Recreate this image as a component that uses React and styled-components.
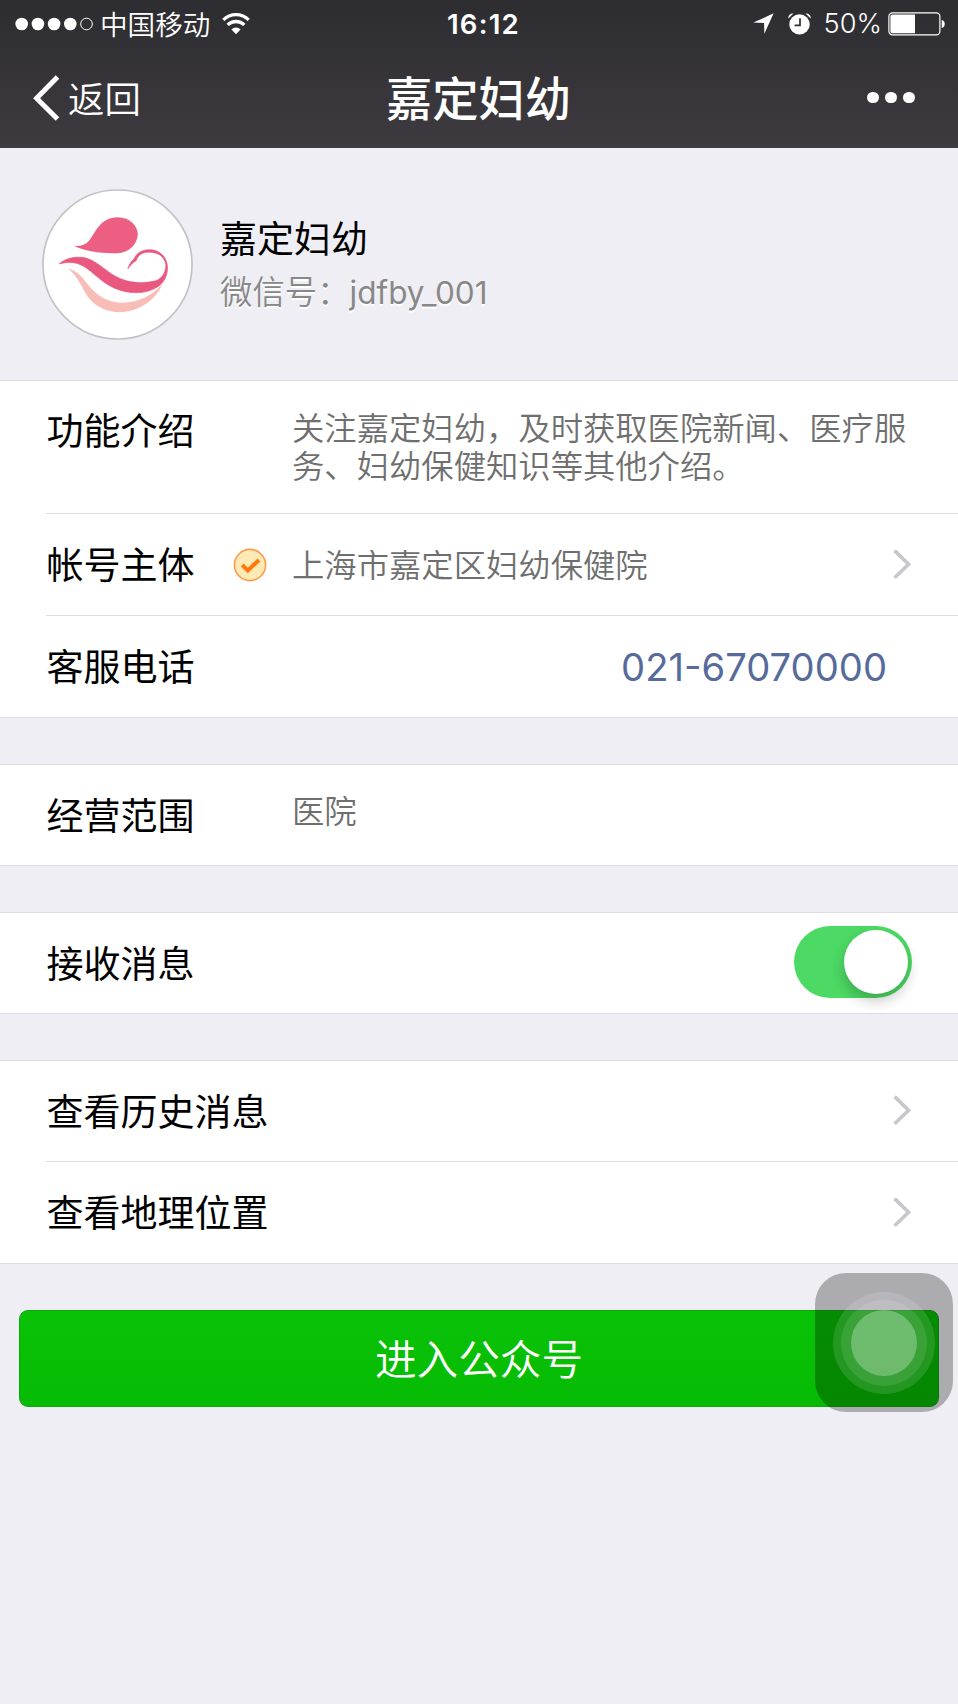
import { useState } from 'react';
import styled, { createGlobalStyle } from 'styled-components';

const intro = '关注嘉定妇幼，及时获取医院新闻、医疗服务、妇幼保健知识等其他介绍。';

export default function App() {
  const [receive, setReceive] = useState(true);

  return (
    <Page>
      <GlobalStyle />
      <Header>
        <StatusBar>
          <StatusLeft>
            <SignalIcon />
            <Carrier>中国移动</Carrier>
            <WifiIcon />
          </StatusLeft>
          <Time>16:12</Time>
          <StatusRight>
            <StatusIcons>
              <LocationIcon />
              <AlarmIcon />
            </StatusIcons>
            <Percent>50%</Percent>
            <BatteryIcon />
          </StatusRight>
        </StatusBar>
        <NavBar>
          <BackButton>
            <BackIcon />
            <span>返回</span>
          </BackButton>
          <Title>嘉定妇幼</Title>
          <MoreButton aria-label='more'>
            <Dot />
            <Dot />
            <Dot />
          </MoreButton>
        </NavBar>
      </Header>

      <Profile>
        <Avatar />
        <ProfileText>
          <Name>嘉定妇幼</Name>
          <WechatId>
            微信号：<Latin>jdfby_001</Latin>
          </WechatId>
        </ProfileText>
      </Profile>

      <Group>
        <Row $height={132} $top>
          <Label>功能介绍</Label>
          <Value $multiline>{intro}</Value>
        </Row>
        <Row $divider>
          <Label>帐号主体</Label>
          <VerifiedIcon />
          <Value>上海市嘉定区妇幼保健院</Value>
          <Chevron />
        </Row>
        <Row $divider>
          <Label>客服电话</Label>
          <Phone>021-67070000</Phone>
        </Row>
      </Group>

      <Group>
        <Row>
          <Label>经营范围</Label>
          <Value $raised>医院</Value>
        </Row>
      </Group>

      <Group>
        <Row>
          <Label>接收消息</Label>
          <Switch $on={receive} role='switch' aria-checked={receive} onClick={() => setReceive(!receive)}>
            <Thumb />
          </Switch>
        </Row>
      </Group>

      <Group>
        <Row>
          <Label>查看历史消息</Label>
          <Chevron />
        </Row>
        <Row $divider>
          <Label>查看地理位置</Label>
          <Chevron />
        </Row>
      </Group>

      <EnterButton>进入公众号</EnterButton>

      <AssistiveTouch>
        <Ring $size={102} $alpha={0.12}>
          <Ring $size={86} $alpha={0.1}>
            <Ring $size={66} $alpha={0.27} />
          </Ring>
        </Ring>
      </AssistiveTouch>
    </Page>
  );
}

/* Icons */

const SignalIcon = () => (
  <svg width='78' height='14' viewBox='0 0 78 14' fill='#fff'>
    {[6.7, 22.9, 39.1, 55.3].map((x) => (
      <circle key={x} cx={x} cy='7' r='6.3' />
    ))}
    <circle cx='71.5' cy='7' r='5.8' fill='none' stroke='#fff' strokeWidth='1' />
  </svg>
);

const WifiIcon = () => (
  <svg width='28' height='22' viewBox='0 0 28 22' fill='none' stroke='#fff' strokeWidth='3.3'>
    <path d='M1.3 6.9a18 18 0 0 1 25.4 0' />
    <path d='M5.7 11.9a11.8 11.8 0 0 1 16.6 0' />
    <path d='M14 21.3l-4.6-4.8a6.5 6.5 0 0 1 9.2 0z' fill='#fff' stroke='none' />
  </svg>
);

const LocationIcon = () => (
  <svg width='21' height='21' viewBox='0 0 21 21' fill='#fff'>
    <path d='M20.6 0.3L0.4 9.6l10.6 0.4l0.4 10.7z' />
  </svg>
);

const AlarmIcon = () => (
  <svg width='23' height='22' viewBox='0 0 23 22'>
    <circle cx='11.5' cy='11.4' r='10.2' fill='#fff' />
    <path d='M0.4 5.4A4.2 4.2 0 0 1 5.4 0.6z M22.6 5.4A4.2 4.2 0 0 0 17.6 0.6z' fill='#fff' />
    <path d='M12 5.2v7.2H6.6' fill='none' stroke='#2f2e33' strokeWidth='1.7' />
  </svg>
);

const BatteryIcon = () => (
  <svg width='58' height='24' viewBox='0 0 58 24'>
    <rect x='0.9' y='0.8' width='51' height='22' rx='3.6' fill='none' stroke='#fff' strokeWidth='1.2' />
    <path d='M4.4 2.5H27V21.2H4.4A2 2 0 0 1 2.4 19.2V4.5A2 2 0 0 1 4.4 2.5z' fill='#fff' />
    <path d='M53.7 8c2.2 0.4 3 2 3 4s-0.8 3.6-3 4z' fill='#fff' />
  </svg>
);

const BackIcon = () => (
  <svg width='28' height='46' viewBox='0 0 28 46' fill='none' stroke='#fff' strokeWidth='5'>
    <path d='M25.5 2L4.6 23.2L25.5 44' />
  </svg>
);

const Avatar = () => (
  <svg width='151' height='151' viewBox='35.5 24.5 453 453'>
    <circle cx='262' cy='251' r='223.5' fill='#fff' stroke='#c3c2c7' strokeWidth='5' />
    <path
      d='M131 195Q162 198 178 178C198 151 211 110 262 109C300 110 323 134 323 161C321 190 296 217 262 217C222 219 170 214 131 195z'
      fill='#ec5f82'
    />
    <path
      d='M112 262C143 270 157 290 174 312C200 345 235 366 277 366C329 364 365 345 397 309C380 355 330 393 267 394C218 393 185 370 165 335C151 308 137 281 112 262z'
      fill='#f9bdb8'
    />
    <path
      d='M87 249C104 234 130 226 160 230C187 235 210 254 235 273C272 302 321 313 377 300C398 292 407 272 407 252C402 222 378 213 353 214C333 215 322 225 318 240C309 243 300 254 293 264C297 250 304 240 311 235C321 212 342 205 366 207C395 211 412 235 412 261C412 284 402 305 383 318C347 341 299 341 253 322C205 301 180 260 142 248C124 243 107 245 87 249z'
      fill='#e9587f'
      stroke='#e9587f'
      strokeWidth='2'
    />
  </svg>
);

const VerifiedIcon = () => (
  <Verified width='34' height='34' viewBox='0 0 34 34'>
    <circle cx='17' cy='17' r='15.6' fill='#ffe9b5' stroke='#ff9a4a' strokeWidth='1.6' />
    <path d='M9.2 17l5.6 5.4L26 12' fill='none' stroke='#ff7a0c' strokeWidth='4' />
  </Verified>
);

const Chevron = () => (
  <ChevronSvg width='20' height='32' viewBox='0 0 20 32'>
    <path d='M2.6 1.6L16.6 15.2L2.6 28.8' fill='none' stroke='#c7c7cc' strokeWidth='3.6' />
  </ChevronSvg>
);

/* Layout */

const GlobalStyle = createGlobalStyle`
  * {
    box-sizing: border-box;
  }

  body {
    margin: 0;
    background: #efeef4;
    font-family: 'Noto Sans CJK SC', sans-serif;
  }

  button {
    margin: 0;
    padding: 0;
    border: none;
    background: none;
    color: inherit;
    font: inherit;
  }

  svg {
    display: block;
    flex: none;
  }
`;

const Page = styled.div`
  width: 958px;
  min-height: 1704px;
  background: #efeef4;
`;

const Header = styled.header`
  height: 148px;
  color: #fff;
  background: linear-gradient(#2d2c31, #3d3b40);
`;

const StatusBar = styled.div`
  display: grid;
  grid-template-columns: 1fr auto 1fr;
  align-items: center;
  height: 47px;
  padding: 0 12px 0 15px;
`;

const StatusLeft = styled.div`
  display: flex;
  align-items: center;
`;

const Carrier = styled.span`
  margin: 0 12px 0 7px;
  padding-bottom: 2px;
  font-size: 27.6px;
  line-height: 40px;
  font-weight: 350;
`;

const Time = styled.span`
  margin-left: 6px;
  font-family: Inter, sans-serif;
  font-size: 27.6px;
  font-weight: 600;
  line-height: 40px;
  letter-spacing: 1.2px;
`;

const StatusRight = styled.div`
  display: flex;
  align-items: center;
  justify-content: flex-end;
`;

const StatusIcons = styled.div`
  display: flex;
  align-items: center;
  gap: 14px;
`;

const Percent = styled.span`
  margin: 1px 6px 0 13px;
  font-family: Inter, sans-serif;
  font-size: 27.2px;
  font-weight: 350;
  line-height: 40px;
`;

const NavBar = styled.nav`
  display: grid;
  grid-template-columns: 1fr auto 1fr;
  align-items: center;
  height: 101px;
  padding: 0 43px 0 32px;
`;

const BackButton = styled.button`
  display: flex;
  align-items: center;
  gap: 8px;
  font-size: 36.4px;
  font-weight: 350;
  line-height: 50px;

  span {
    padding-bottom: 2px;
  }
`;

const Title = styled.h1`
  margin: 0 0 0 10px;
  padding-bottom: 3px;
  font-size: 46.3px;
  font-weight: 500;
  line-height: 60px;
`;

const MoreButton = styled.button`
  display: flex;
  justify-self: end;
  gap: 6.6px;
`;

const Dot = styled.i`
  width: 11.6px;
  height: 11.6px;
  border-radius: 50%;
  background: #fff;
`;

const Profile = styled.section`
  display: flex;
  align-items: center;
  gap: 27.5px;
  height: 232px;
  padding: 0 41.5px;
`;

const ProfileText = styled.div`
  display: flex;
  flex-direction: column;
  padding-top: 1px;
`;

const Name = styled.div`
  font-size: 37px;
  line-height: 54px;
  color: #000;
`;

const WechatId = styled.div`
  font-size: 32.4px;
  font-weight: 350;
  line-height: 52px;
  color: #888;
  text-shadow: 0 2px 0 #fff;
`;

const Latin = styled.span`
  font-family: Inter, sans-serif;
  font-size: 31.5px;
  font-weight: 400;
`;

const Group = styled.section`
  margin-bottom: 46px;
  border: solid #dedde2;
  border-width: 1px 0;
  background: #fff;
`;

const Row = styled.div`
  display: flex;
  align-items: ${(p) => (p.$top ? 'flex-start' : 'center')};
  height: ${(p) => p.$height || (p.$divider ? 102 : 100)}px;
  margin-left: 46px;
  padding: ${(p) => (p.$top ? '24px' : 0)} 46px 0 0.5px;
  border-top: ${(p) => (p.$divider ? '1px solid #dedde2' : 'none')};
`;

const Label = styled.div`
  flex: none;
  min-width: 245.5px;
  padding-bottom: 3px;
  font-size: 37px;
  line-height: 48px;
  color: #000;

  &:has(+ svg) {
    min-width: 186.5px;
  }
`;

const Verified = styled.svg`
  margin-right: 25px;
`;

const ChevronSvg = styled.svg`
  margin-left: auto;
`;

const Value = styled.div`
  width: ${(p) => (p.$multiline ? '620px' : 'auto')};
  padding-top: ${(p) => (p.$multiline ? '2px' : 0)};
  padding-bottom: ${(p) => (p.$raised ? '11px' : '3px')};
  font-size: 32.35px;
  font-weight: 350;
  line-height: 38.4px;
  color: #6f6f6f;
`;

const Phone = styled.a`
  margin-left: auto;
  padding-right: 25px;
  font-family: Inter, sans-serif;
  font-size: 38.2px;
  line-height: 48px;
  color: #566b9b;
`;

const Switch = styled.button`
  display: flex;
  align-items: center;
  justify-content: ${(p) => (p.$on ? 'flex-end' : 'flex-start')};
  width: 118px;
  height: 72px;
  margin: 0 0 2px auto;
  padding: 0 4px;
  border-radius: 36px;
  background: ${(p) => (p.$on ? '#4cd964' : '#e5e5ea')};
`;

const Thumb = styled.span`
  width: 64px;
  height: 64px;
  border-radius: 50%;
  background: #fff;
  box-shadow: 0 7px 14px rgba(0, 0, 0, 0.22);
`;

const EnterButton = styled.button`
  display: block;
  width: 920px;
  height: 97px;
  margin: 0 19px;
  padding-bottom: 4px;
  border: 1px solid #0aa80a;
  border-radius: 9px;
  background: linear-gradient(#09c206, #07bb04);
  color: #fff;
  font-size: 41.6px;
  font-weight: 350;
  line-height: 60px;
`;

/* Floats over the page */
const AssistiveTouch = styled.div`
  position: fixed;
  top: 1273px;
  left: 815px;
  display: grid;
  place-items: center;
  width: 138px;
  height: 139px;
  border-radius: 31px;
  background: rgba(0, 0, 0, 0.28);
`;

const Ring = styled.div`
  display: grid;
  place-items: center;
  width: ${(p) => p.$size}px;
  height: ${(p) => p.$size}px;
  border-radius: 50%;
  background: rgba(255, 255, 255, ${(p) => p.$alpha});
`;
